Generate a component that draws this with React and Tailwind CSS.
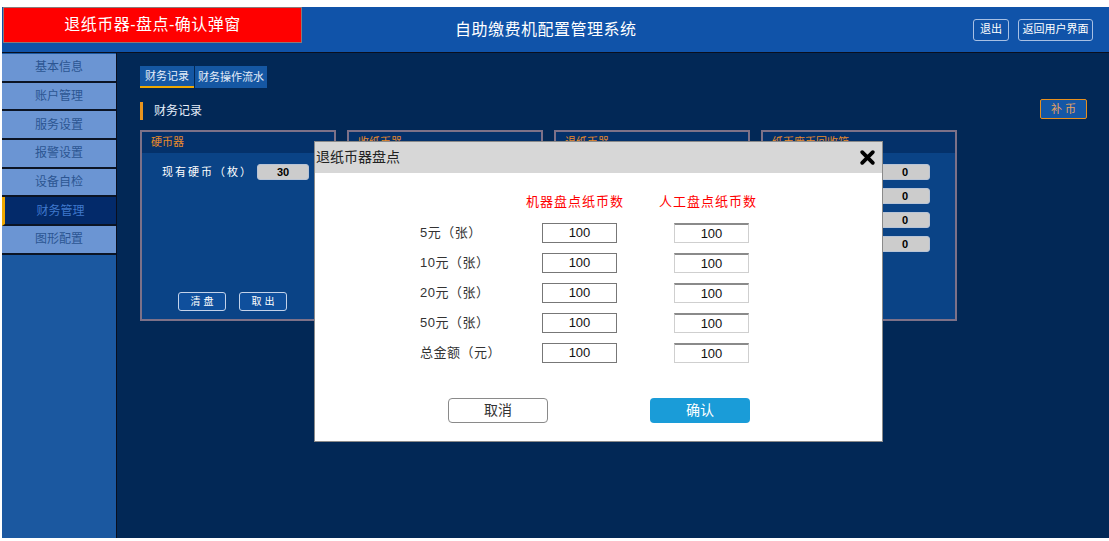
import { useState } from 'react';

/* ------------------ DATA ------------------ */

const menu = ['基本信息', '账户管理', '服务设置', '报警设置', '设备自检', '财务管理', '图形配置'];

const countRows = [
  { label: '5元（张）', machine: '100', manual: '100' },
  { label: '10元（张）', machine: '100', manual: '100' },
  { label: '20元（张）', machine: '100', manual: '100' },
  { label: '50元（张）', machine: '100', manual: '100' },
  { label: '总金额（元）', machine: '100', manual: '100' },
];

/* ------------------ PIECES ------------------ */

const ValueBox = ({ value, wide }) => (
  <div
    className={`${wide ? 'w-[52px]' : 'w-[50px]'} h-[16px] rounded-[3px] bg-[#cccccc] border border-[#b8c4d6] flex items-center justify-center text-[11px] font-bold text-black`}
  >
    {value}
  </div>
);

const CardButton = ({ children }) => (
  <button
    type="button"
    className="w-[48px] h-[19px] rounded-[3px] border border-[#c3d2ea] bg-[#0f4f9c] text-[10px] text-white tracking-[3px] pl-[3px] flex items-center justify-center"
  >
    {children}
  </button>
);

function Card({ title, children }) {
  return (
    <div className="w-[196px] h-[191px] border-2 border-[#7d7188] bg-[#0a4386] flex flex-col">
      <div className="h-[21px] shrink-0 bg-[#04316a] flex items-center pl-[9px] text-[11px] text-[#e88a2a]">
        {title}
      </div>
      {children}
    </div>
  );
}

/* ------------------ MODAL ------------------ */

function CountDialog() {
  const [rows, setRows] = useState(countRows);

  const update = (i, v) =>
    setRows((r) => r.map((row, idx) => (idx === i ? { ...row, manual: v } : row)));

  return (
    <div className="absolute left-[314px] top-[141px] w-[569px] h-[301px] bg-white border border-[#8a8a8a] flex flex-col">
      {/* HEADER */}
      <div className="h-[31px] shrink-0 bg-[#d7d7d7] flex items-center justify-between pl-[1px] pr-[6px]">
        <span className="text-[14px] text-[#222]">退纸币器盘点</span>
        <svg className="w-[17px] h-[17px]" viewBox="0 0 16 16">
          <path d="M3 3l10 10M13 3L3 13" stroke="#000" strokeWidth="3.6" strokeLinecap="round" />
        </svg>
      </div>

      {/* BODY */}
      <div className="pt-[19px] pl-[105px]">
        <div className="flex text-[13px] tracking-[1px] text-[#ff0000] whitespace-nowrap">
          <span className="ml-[106px] w-[100px]">机器盘点纸币数</span>
          <span className="ml-[33px] w-[100px]">人工盘点纸币数</span>
        </div>

        <div className="mt-[11px] flex flex-col gap-[10px]">
          {rows.map((row, i) => (
            <div key={row.label} className="grid grid-cols-[122px_75px_57px_75px] items-center">
              <span className="text-[13px] text-[#333] tracking-[0.5px]">{row.label}</span>
              <div className="h-[20px] border border-[#777] flex items-center justify-center text-[13px] text-[#111]">
                {row.machine}
              </div>
              <div />
              <input
                value={row.manual}
                onChange={(e) => update(i, e.target.value)}
                className="h-[20px] w-[75px] border border-[#cfcfcf] border-t-[#8a8a8a] border-t-2 text-center text-[13px] text-[#111] outline-none"
              />
            </div>
          ))}
        </div>

        {/* ACTIONS */}
        <div className="mt-[35px] flex pl-[28px] gap-[102px]">
          <button
            type="button"
            className="w-[100px] h-[25px] rounded-[4px] border border-[#8a8a8a] bg-white text-[14px] text-[#333]"
          >
            取消
          </button>
          <button
            type="button"
            className="w-[100px] h-[25px] rounded-[4px] bg-[#1a9cd8] text-[14px] text-white"
          >
            确认
          </button>
        </div>
      </div>
    </div>
  );
}

/* ------------------ PAGE ------------------ */

export default function App() {
  return (
    <div className="relative w-[1109px] h-[541px] bg-white pt-[7px] pl-[2px] overflow-hidden font-['Liberation_Sans','Noto_Sans_CJK_SC',sans-serif]">
      {/* TOP BAR */}
      <div className="h-[46px] bg-[#1053a9] border-b border-[#0a0f1e] flex items-start">
        <div className="ml-[1px] w-[299px] h-[36px] bg-[#ff0000] border border-[#8a7a7a] flex items-center justify-center text-[16px] text-white tracking-[0.5px]">
          退纸币器-盘点-确认弹窗
        </div>
        <div className="ml-[153px] h-[45px] flex items-center text-[16px] text-white tracking-[0.5px]">
          自助缴费机配置管理系统
        </div>
        <div className="ml-auto mr-[16px] h-[45px] flex items-center gap-[9px]">
          <button
            type="button"
            className="w-[36px] h-[22px] rounded-[3px] border border-[#a8c0e4] text-[11px] text-white"
          >
            退出
          </button>
          <button
            type="button"
            className="w-[75px] h-[22px] rounded-[3px] border border-[#a8c0e4] text-[11px] text-white"
          >
            返回用户界面
          </button>
        </div>
      </div>

      {/* BODY */}
      <div className="h-[485px] flex">
        {/* SIDEBAR */}
        <div className="w-[115px] shrink-0 bg-[#1b58a0] border-r border-[#0a0f1e] flex flex-col pt-[1px]">
          {menu.map((item) => {
            const active = item === '财务管理';
            return (
              <div
                key={item}
                className={`h-[28.7px] border-b-2 border-[#0b1424] flex items-center justify-center text-[12px] ${
                  active
                    ? 'bg-[#032a6a] text-[#3f78cc] border-l-[3px] border-l-[#f0a800]'
                    : 'bg-[#6b95d3] text-[#2c5592]'
                }`}
              >
                {item}
              </div>
            );
          })}
        </div>

        {/* MAIN */}
        <div className="flex-1 bg-[#022856] pl-[23px] pt-[13px] pr-[22px]">
          {/* TABS */}
          <div className="flex gap-[1px]">
            <div className="w-[54px] h-[22px] bg-[#1557a3] border-b-2 border-[#f0a800] flex items-center justify-center text-[11px] text-[#e6eefa]">
              财务记录
            </div>
            <div className="w-[72px] h-[22px] bg-[#1557a3] flex items-center justify-center text-[11px] text-[#e6eefa]">
              财务操作流水
            </div>
          </div>

          {/* SECTION TITLE */}
          <div className="mt-[11px] flex items-start justify-between">
            <div className="mt-[3px] flex items-center">
              <div className="w-[3px] h-[18px] bg-[#e8941e]" />
              <span className="ml-[11px] text-[12px] text-[#e6eefa]">财务记录</span>
            </div>
            <button
              type="button"
              className="w-[47px] h-[20px] rounded-[2px] border border-[#e8901e] bg-[#1457a6] text-[11px] text-[#e9a460] tracking-[3px] pl-[3px]"
            >
              补币
            </button>
          </div>

          {/* CARDS */}
          <div className="mt-[10px] flex gap-[11px]">
            <Card title="硬币器">
              <div className="pt-[11px] pr-[25px] flex items-center justify-end gap-[4px]">
                <span className="text-[11px] text-white tracking-[2px]">现有硬币（枚）</span>
                <ValueBox value="30" wide />
              </div>
              <div className="mt-auto mb-[8px] pl-[36px] flex gap-[13px]">
                <CardButton>清盘</CardButton>
                <CardButton>取出</CardButton>
              </div>
            </Card>
            <Card title="收纸币器" />
            <Card title="退纸币器" />
            <Card title="纸币废币回收箱">
              <div className="pt-[11px] pr-[25px] flex flex-col items-end gap-[8px]">
                <ValueBox value="0" />
                <ValueBox value="0" />
                <ValueBox value="0" />
                <ValueBox value="0" />
              </div>
            </Card>
          </div>
        </div>
      </div>

      <CountDialog />
    </div>
  );
}
